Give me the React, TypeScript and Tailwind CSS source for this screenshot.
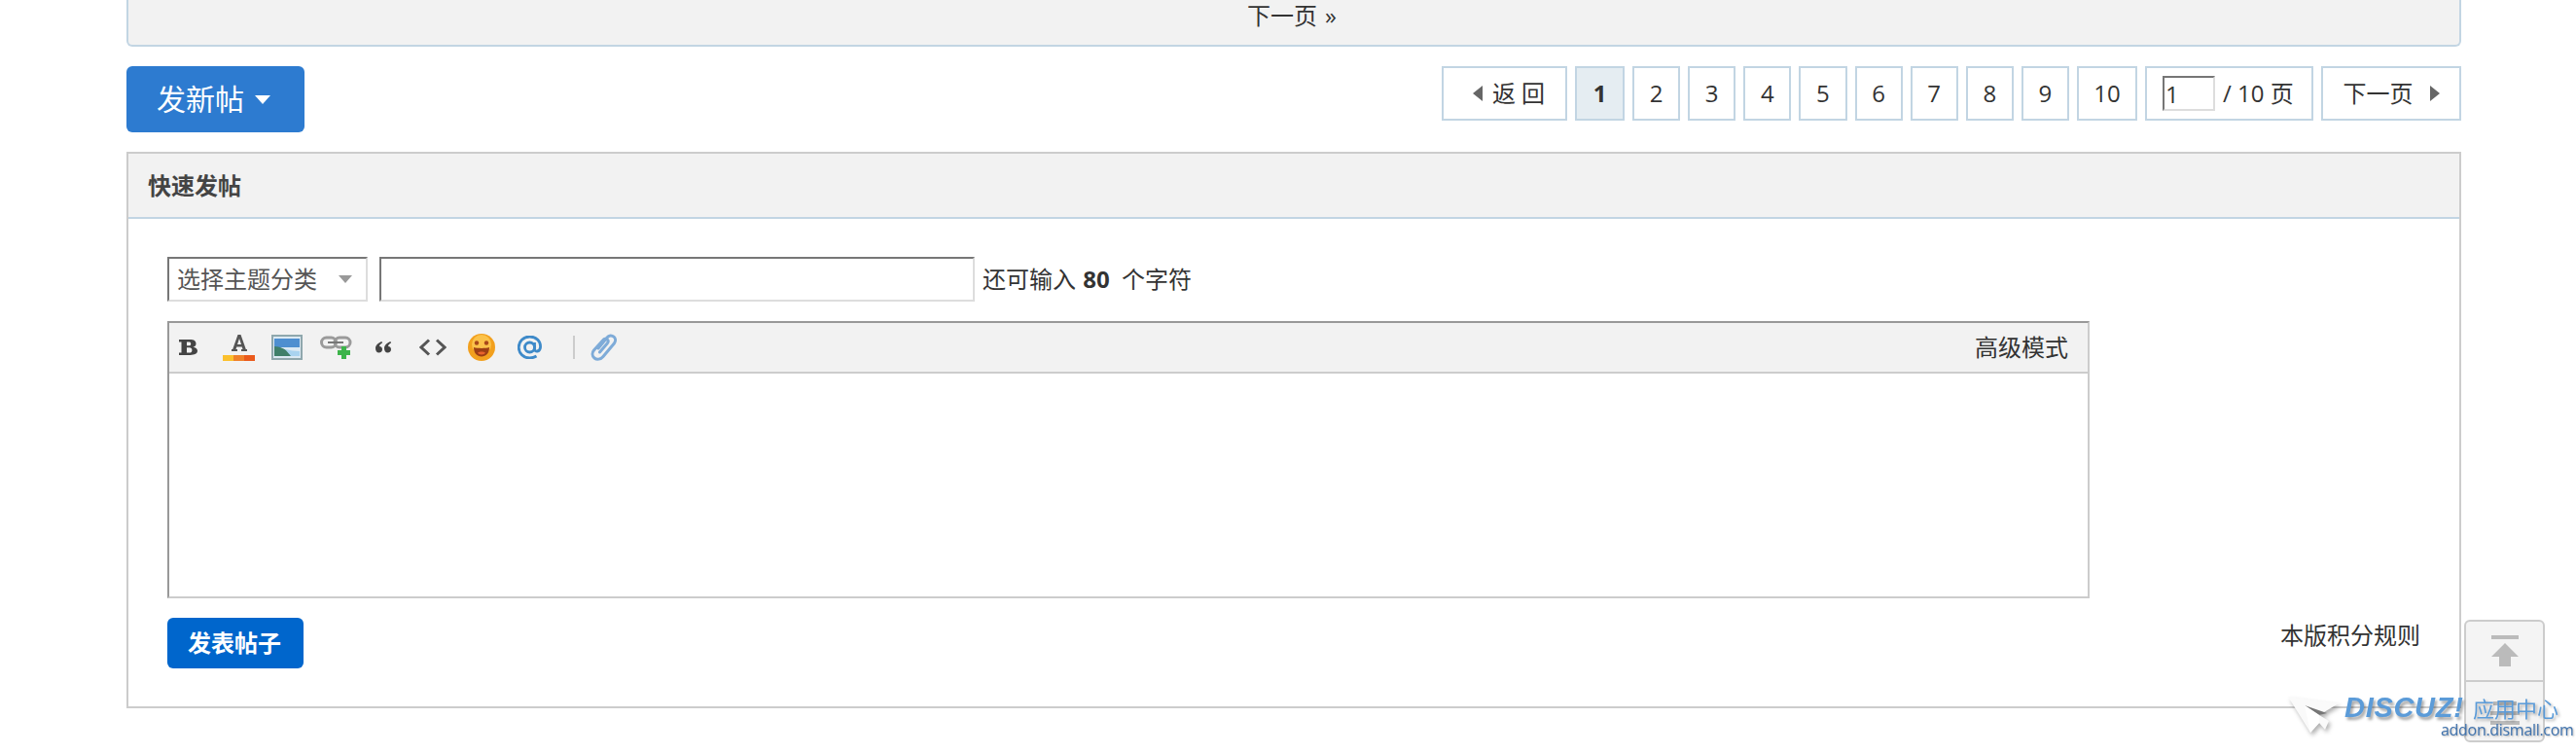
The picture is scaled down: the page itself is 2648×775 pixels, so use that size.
const pages = ['2', '3', '4', '5', '6', '7', '8', '9'];

const pageBox = 'flex h-[56px] items-center justify-center border-2 border-[#c2d5e3] bg-white text-[#333]';

function ToolbarIcons() {
    return (
        <div className="flex items-center">
            {/* bold */}
            <svg className="ml-[10px] h-[20px] w-[20px]" viewBox="0 0 20 20">
                <path d="M0 2h11c4.500 0 6.500 1.500 6.500 4.200 0 1.800-1 3-3 3.500 2.700.4 4.500 1.700 4.500 3.900C19 16.500 16 18 11.500 18H0v-2.500h2.500v-11H0z M8 4.500v3.800h2c1.500 0 2.200-.6 2.200-1.900S11.500 4.500 10 4.500z M8 10.300v5.200h2.700c1.800 0 2.700-.9 2.700-2.600s-.9-2.600-2.700-2.600z" fill="#444" fillRule="evenodd" />
            </svg>
            {/* font colour */}
            <svg className="ml-[25px] h-[28px] w-[33px]" viewBox="0 0 33 28">
                <path d="M9 18h6v-2h-1.500l.8-2.500h5.400l.8 2.500H19v2h6v-2h-1.200L18.500 1h-3L10.200 16H9z M15 11l2-6 2 6z" fill="#555" fillRule="evenodd" />
                <rect x="0" y="22" width="33" height="6" fill="#f0812a" />
                <rect x="0" y="22" width="11" height="6" fill="#fbc02d" />
                <rect x="22" y="22" width="11" height="6" fill="#ea5a1c" />
            </svg>
            {/* image */}
            <svg className="ml-[17px] h-[26px] w-[32px]" viewBox="0 0 32 26">
                <rect x="1" y="1" width="30" height="24" fill="#dbe9f3" stroke="#8fa7ad" strokeWidth="2" />
                <rect x="3" y="4" width="26" height="9" fill="#4e8fd0" />
                <path d="M3 12c6 0 10 3 15 5l11 1v4H3z" fill="#3f7f6a" />
                <path d="M14 15c5 1 10 2 15 2v5H20z" fill="#a9d3f0" />
            </svg>
            {/* link with plus */}
            <svg className="ml-[18px] h-[26px] w-[33px]" viewBox="0 0 33 26">
                <rect x="1.500" y="3" width="15" height="10" rx="5" fill="none" stroke="#9a9a9a" strokeWidth="3" />
                <rect x="15" y="3" width="16" height="10" rx="5" fill="none" stroke="#9a9a9a" strokeWidth="3" />
                <rect x="8" y="7" width="16" height="2" fill="#777" />
                <path d="M22 12h5v4h4v5h-4v4h-5v-4h-4v-5h4z" fill="#3cb44a" />
            </svg>
            {/* quote */}
            <svg className="ml-[24px] h-[12px] w-[16px]" viewBox="0 0 16 12">
                <path d="M6.500 0C3 1.500 0 3.500 0 7c0 2.500 1.300 4.500 3.500 4.500S7 10 7 8 5.500 5 4 5c.2-1.500 1.200-2.700 3-3.500z M15.500 0C12 1.500 9 3.500 9 7c0 2.500 1.300 4.500 3.500 4.500S16 10 16 8s-1.500-3-3-3c.2-1.500 1.200-2.700 3-3.500z" fill="#444" />
            </svg>
            {/* code */}
            <svg className="ml-[29px] h-[18px] w-[28px]" viewBox="0 0 28 18" fill="none" stroke="#555" strokeWidth="3">
                <path d="M10 1.500 2 9l8 7.500" />
                <path d="M18 1.500 26 9l-8 7.500" />
            </svg>
            {/* smiley */}
            <svg className="ml-[22px] h-[28px] w-[28px]" viewBox="0 0 28 28">
                <circle cx="14" cy="14" r="14" fill="#f2a01e" />
                <circle cx="14" cy="11" r="10" fill="#fbc24a" />
                <circle cx="9" cy="9.500" r="2.200" fill="#a8481a" />
                <circle cx="19" cy="9.500" r="2.200" fill="#a8481a" />
                <path d="M6 14c4 1.200 12 1.200 16 0 0 6-3.500 9.500-8 9.500S6 20 6 14z" fill="#9c3f14" />
                <path d="M10 19.500c2-1.500 6-1.500 8 0-1 2.500-7 2.500-8 0z" fill="#e8622c" />
            </svg>
            {/* at */}
            <svg className="ml-[23px] h-[24px] w-[25px]" viewBox="0 0 25 24" fill="none" stroke="#3e8ac9" strokeWidth="2.800">
                <circle cx="12.500" cy="12" r="5" />
                <path d="M17.500 7v7c0 3 5.500 3 6-2 .5-6-4-11-11-11C6 1 1.200 6 1.200 12S6 23 12.500 23c3 0 5-.8 7-2" />
            </svg>
            <div className="ml-[32px] h-[24px] w-[2px] bg-[#ccc]" />
            {/* attachment */}
            <svg className="ml-[16px] h-[28px] w-[27px]" viewBox="0 0 27 28" fill="none" stroke="#7eabd8" strokeWidth="3" strokeLinecap="round">
                <path d="M8 15 17 4c2-2.500 5-2.500 7-.8s2 4.500.3 6.800L13 23.500c-2.500 3-6.500 3.500-9 1.500s-2.500-5.500-.5-8L13 6.500c1.200-1.500 3-1.700 4.200-.7s1.200 2.700 0 4.200L9.500 19" />
            </svg>
        </div>
    );
}

function Watermark() {
    return (
        <div className="fixed right-[19px] top-[714px] h-[46px] w-[277px]">
            <svg className="absolute left-0 top-[2px] h-[38px] w-[52px] drop-shadow-[2px_3px_2px_rgba(0,0,0,0.3)]" viewBox="0 0 52 38">
                <path d="M0 0 52 7 32 19 42 25 38 34 32 27 23 37z" fill="#fafafa" />
                <path d="M17 9 40 17 32 19z" fill="#777" />
                <path d="M17 9 32 19 32 27 23 37z" fill="#fff" />
            </svg>
            <span className="absolute left-[58px] top-[-6px] text-[29px] font-bold italic leading-[38px] tracking-[0.7px] text-[#5b9bd8] [font-family:'Liberation_Sans',sans-serif] [text-shadow:2px_3px_3px_rgba(0,0,0,0.35)]">DISCUZ!</span>
            <span className="absolute left-[190px] top-[-3px] whitespace-nowrap text-[22px] leading-[32px] text-[#5b9bd8] [font-family:'Noto_Sans_CJK_SC',sans-serif] [text-shadow:2px_2px_3px_rgba(0,0,0,0.3)]">应用中心</span>
            <span className="absolute left-[157px] top-[26px] whitespace-nowrap text-[16px] leading-[20px] tracking-[-0.3px] text-[#3f72ad] [font-family:'Open_Sans',sans-serif] [text-shadow:1px_1px_2px_rgba(0,0,0,0.3)]">addon.dismall.com</span>
        </div>
    );
}

export default function App() {
    return (
        <div className="h-[775px] overflow-hidden bg-white text-[24px] leading-[32px] text-[#333] [font-family:'Open_Sans','Noto_Sans_CJK_SC',sans-serif]">
            <div className="ml-[130px] w-[2400px]">
                <div className="flex h-[48px] items-start justify-center rounded-b-[6px] border-x-2 border-b-2 border-[#c2d5e3] bg-[#f2f2f2] pr-[4px] pt-[1px]">
                    <a className="leading-[30px]">下一页<span className="ml-[8px]">»</span></a>
                </div>

                <div className="mt-[20px] flex items-start justify-between">
                    <button className="flex h-[68px] w-[183px] items-center justify-center gap-[11px] rounded-[6px] bg-[#2d7bd0] pr-[4px] text-[30px] text-white">
                        发新帖
                        <span className="h-0 w-0 border-x-[8px] border-t-[9px] border-x-transparent border-t-white" />
                    </button>

                    <div className="flex gap-2">
                        <a className={`${pageBox} w-[129px] gap-[10px] pl-[9px]`}>
                            <span className="h-0 w-0 border-y-[8.5px] border-r-[10px] border-y-transparent border-r-[#666]" />
                            返 回
                        </a>
                        <a className="flex h-[56px] w-[51px] items-center justify-center border-2 border-[#c2d5e3] bg-[#e5edf2] font-bold text-[#333]">1</a>
                        {pages.map((p) => (
                            <a key={p} className={`${pageBox} w-[49.125px]`}>{p}</a>
                        ))}
                        <a className={`${pageBox} w-[62px]`}>10</a>
                        <label className={`${pageBox} w-[173px] justify-start gap-[8px] pl-[16px]`}>
                            <input
                                defaultValue="1"
                                className="h-[36px] w-[54px] border-2 border-b-[#ddd] border-l-[#767676] border-r-[#ddd] border-t-[#767676] bg-white px-[1px] text-[24px]"
                            />
                            <span className="whitespace-nowrap">/ 10 页</span>
                        </label>
                        <a className={`${pageBox} w-[144px] gap-[17px]`}>
                            下一页
                            <span className="h-0 w-0 border-y-[8.5px] border-l-[10px] border-y-transparent border-l-[#666]" />
                        </a>
                    </div>
                </div>

                <div className="mt-[20px] h-[572px] border-2 border-[#ccc]">
                    <div className="flex h-[67px] items-center border-b-2 border-[#c2d5e3] bg-[#f2f2f2] pl-[20px] font-bold text-[#444]">快速发帖</div>

                    <div className="pl-[40px] pt-[39px]">
                        <div className="flex items-center">
                            <div className="flex h-[46px] w-[206px] items-center justify-between border-2 border-b-[#ddd] border-l-[#767676] border-r-[#ddd] border-t-[#767676] pl-[8px] pr-[14px] text-[#555]">
                                选择主题分类
                                <span className="h-0 w-0 border-x-[7px] border-t-[8px] border-x-transparent border-t-[#999]" />
                            </div>
                            <input className="ml-[12px] h-[46px] w-[612px] border-2 border-b-[#ddd] border-l-[#767676] border-r-[#ddd] border-t-[#767676]" />
                            <span className="ml-[8px]">还可输入 <strong className="ml-[1px] mr-[6px]">80</strong> 个字符</span>
                        </div>

                        <div className="mt-[20px] h-[285px] w-[1976px] border-2 border-b-[#ccc] border-l-[#999] border-r-[#ccc] border-t-[#999]">
                            <div className="flex h-[52px] items-center justify-between border-b-2 border-[#ccc] bg-[#f2f2f2] pr-[20px]">
                                <ToolbarIcons />
                                <a>高级模式</a>
                            </div>
                        </div>

                        <div className="mt-[20px] flex items-start justify-between pr-[40px]">
                            <button className="h-[52px] w-[140px] rounded-[6px] bg-[#0066cc] pr-[2px] font-bold text-white">发表帖子</button>
                            <a className="mt-[2px]">本版积分规则</a>
                        </div>
                    </div>
                </div>
            </div>

            {/* back to top */}
            <div className="fixed left-[2533px] top-[637px] flex h-[126px] w-[83px] flex-col rounded-[6px] border-2 border-[#ccc] bg-[#f4f4f4]">
                <div className="flex h-[62px] flex-col items-center border-b-2 border-[#ccc] pt-[14px]">
                    <svg className="h-[32px] w-[28px]" viewBox="0 0 28 32">
                        <rect width="28" height="4" fill="#bbb" />
                        <path d="M14 8 28 22H20V32H8V22H0z" fill="#bbb" />
                    </svg>
                </div>
                <div className="flex flex-1 flex-col items-center gap-[6px] pt-[20px]">
                    <div className="h-[4px] w-[24px] bg-[#bbb]" />
                    <div className="h-[4px] w-[30px] bg-[#bbb]" />
                    <div className="h-[4px] w-[30px] bg-[#bbb]" />
                </div>
            </div>

            <Watermark />
        </div>
    );
}
